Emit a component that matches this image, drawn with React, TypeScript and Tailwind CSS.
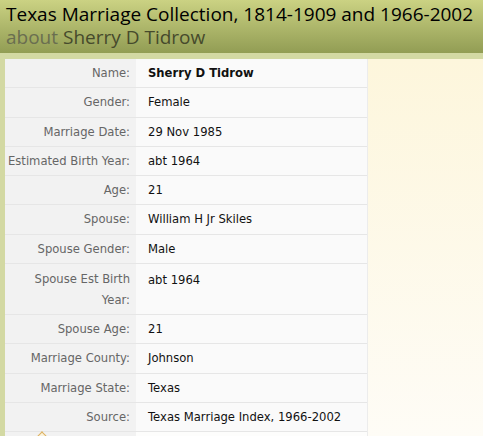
import React from "react";

const rows: { label: React.ReactNode; value: string; bold?: boolean; tall?: boolean }[] = [
  { label: "Name:", value: "Sherry D Tidrow", bold: true },
  { label: "Gender:", value: "Female" },
  { label: "Marriage Date:", value: "29 Nov 1985" },
  { label: "Estimated Birth Year:", value: "abt 1964" },
  { label: "Age:", value: "21" },
  { label: "Spouse:", value: "William H Jr Skiles" },
  { label: "Spouse Gender:", value: "Male" },
  {
    label: (
      <>
        Spouse Est Birth
        <br />
        Year:
      </>
    ),
    value: "abt 1964",
    tall: true,
  },
  { label: "Spouse Age:", value: "21" },
  { label: "Marriage County:", value: "Johnson" },
  { label: "Marriage State:", value: "Texas" },
  { label: "Source:", value: "Texas Marriage Index, 1966-2002" },
];

export default function App() {
  return (
    <div className="w-[483px] h-[436px] overflow-hidden bg-[#d3d9a3] flex flex-col">
      <div className="h-[53px] bg-gradient-to-b from-[#cbd283] to-[#929d54] px-[6px] pt-[3px] font-['Open_Sans',sans-serif]">
        <div className="text-[19px] leading-[23px] h-[23px] text-black">
          Texas Marriage Collection, 1814-1909 and 1966-2002
        </div>
        <div className="text-[19px] leading-[23px] h-[23px]">
          <span className="text-[#6a6e50]">about</span>{" "}
          <span className="text-[#464a2c]">Sherry D Tidrow</span>
        </div>
      </div>
      <div className="flex flex-1 pt-[6px] pl-[5px]">
        <div className="w-[362px] flex flex-col font-['DejaVu_Sans',sans-serif] text-[11.6px]">
          <div className="flex flex-col bg-[#fafafa]">
            {rows.map((r, i) => (
              <div key={i} className="flex border-b border-[#e6e6e6]">
                <div
                  className={`w-[131px] shrink-0 whitespace-nowrap bg-[#f2f2f2] text-right text-[#666] pr-[6px] ${
                    r.tall ? "pt-[5px] pb-[3px] leading-[21px]" : "py-[7px] leading-[14.3px]"
                  }`}
                >
                  {r.label}
                </div>
                <div
                  className={`flex-1 pl-[12px] text-[#111] leading-[14px] ${
                    r.bold ? "font-bold" : ""
                  } ${r.tall ? "pt-[9px]" : "py-[7px]"}`}
                >
                  {r.value}
                </div>
              </div>
            ))}
          </div>
          <div className="flex flex-1">
            <div className="w-[131px] bg-[#f2f2f2] relative">
              <div className="absolute left-[33px] top-[1px] w-[8px] h-[8px] border-l border-t border-[#dcb060] bg-[#fbf3dc] rotate-45" />
            </div>
            <div className="flex-1 bg-[#fdfdfc]" />
          </div>
        </div>
        <div className="flex-1 bg-gradient-to-b from-[#fdf6dc] to-[#fefcf6] border-l border-[#ececec]" />
      </div>
    </div>
  );
}
